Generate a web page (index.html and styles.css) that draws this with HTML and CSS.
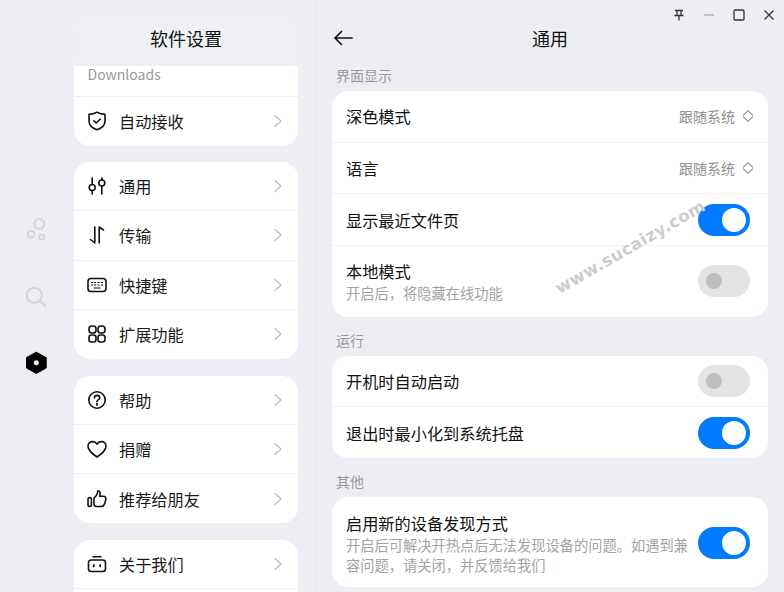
FILE: index.html
```html
<!DOCTYPE html>
<html lang="zh-CN">
<head>
<meta charset="utf-8">
<title>软件设置</title>
<link rel="stylesheet" href="styles.css">
</head>
<body>
<div class="app">
  <nav class="rail">
    <svg class="rail-icon" viewBox="0 0 26 26" fill="none" stroke="#d2d3d6" stroke-width="1.700"><circle cx="15.800" cy="9" r="5"/><circle cx="7.500" cy="19.300" r="3.400"/><circle cx="18.200" cy="22" r="2.600"/></svg>
    <svg class="rail-icon" viewBox="0 0 26 26" fill="none" stroke="#d2d3d6" stroke-width="1.900"><circle cx="10.800" cy="12.300" r="7.600"/><path d="M16.500 18 22.500 23.500"/></svg>
    <svg class="rail-icon" viewBox="0 0 26 26"><path fill="#000" stroke="#000" stroke-linejoin="round" d="M12.800 2.200 22.700 7.600V18L12.800 23.500 3 18V7.600Z"/><circle cx="12.800" cy="12.800" r="2.500" fill="#edeef3"/></svg>
  </nav>

  <section class="list-pane">
    <header class="list-header">
      <div class="header-glow"></div>
      <h1 class="pane-title">软件设置</h1>
    </header>
    <div class="card card-cut">
      <div class="cut-row">Downloads</div>
      <a class="nav-row">
        <svg class="nav-icon" viewBox="0 0 20 20"><path d="M10 1.200C12.400 2.800 15 3.400 18 3.400V10c0 4.400-3.400 7.200-8 8.800C5.400 17.200 2 14.400 2 10V3.400C5 3.400 7.600 2.800 10 1.200Z"/><path d="M6.900 9.900 9.200 12 13.300 8"/></svg>
        <span class="nav-label">自动接收</span>
        <svg class="chev" viewBox="0 0 10 14"><path d="M2 1.500 8 7 2 12.500"/></svg>
      </a>
    </div>
    <div class="card">
      <a class="nav-row">
        <svg class="nav-icon" viewBox="0 0 20 20"><circle cx="5.200" cy="11.500" r="3"/><path d="M5.200 2v6.500M5.200 14.500V18"/><circle cx="14.800" cy="7" r="3"/><path d="M14.800 2v2M14.800 10V18"/></svg>
        <span class="nav-label">通用</span>
        <svg class="chev" viewBox="0 0 10 14"><path d="M2 1.500 8 7 2 12.500"/></svg>
      </a>
      <a class="nav-row">
        <svg class="nav-icon" viewBox="0 0 20 20"><path d="M7.800 2V18L3.500 14.500M12.200 18V2L16.500 5"/></svg>
        <span class="nav-label">传输</span>
        <svg class="chev" viewBox="0 0 10 14"><path d="M2 1.500 8 7 2 12.500"/></svg>
      </a>
      <a class="nav-row">
        <svg class="nav-icon" viewBox="0 0 20 20"><rect x="1" y="3.500" width="18" height="13" rx="3"/><path class="thin" d="M4.500 7.500h1.200M7.500 7.500h1.200M11 7.500h1.200M14.300 7.500h1.200M4.500 10h1.200M7.500 10h1.200M11 10h1.200M14.300 10h1.200M7 13h6"/></svg>
        <span class="nav-label">快捷键</span>
        <svg class="chev" viewBox="0 0 10 14"><path d="M2 1.500 8 7 2 12.500"/></svg>
      </a>
      <a class="nav-row">
        <svg class="nav-icon" viewBox="0 0 20 20"><rect x="2" y="2" width="7" height="7" rx="2.800"/><rect x="11" y="2" width="7" height="7" rx="2.800"/><rect x="2" y="11" width="7" height="7" rx="2.400"/><rect x="11" y="11" width="7" height="7" rx="2.400"/></svg>
        <span class="nav-label">扩展功能</span>
        <svg class="chev" viewBox="0 0 10 14"><path d="M2 1.500 8 7 2 12.500"/></svg>
      </a>
    </div>
    <div class="card">
      <a class="nav-row">
        <svg class="nav-icon" viewBox="0 0 20 20"><circle cx="10" cy="10" r="8.200"/><path d="M7.400 8c0-1.600 1.200-2.600 2.700-2.600s2.600 1 2.600 2.300c0 2-2.700 2-2.700 4"/><path class="dot" d="M10 13.700v1.300"/></svg>
        <span class="nav-label">帮助</span>
        <svg class="chev" viewBox="0 0 10 14"><path d="M2 1.500 8 7 2 12.500"/></svg>
      </a>
      <a class="nav-row">
        <svg class="nav-icon" viewBox="0 0 20 20"><path d="M10 18C5 14.500 1 11.500 1 7.200 1 4.400 3.100 2.600 5.400 2.600 7.300 2.600 9 3.600 10 5.200 11 3.600 12.700 2.600 14.600 2.600 16.900 2.600 19 4.400 19 7.200 19 11.500 15 14.500 10 18Z"/></svg>
        <span class="nav-label">捐赠</span>
        <svg class="chev" viewBox="0 0 10 14"><path d="M2 1.500 8 7 2 12.500"/></svg>
      </a>
      <a class="nav-row">
        <svg class="nav-icon" viewBox="0 0 20 20"><rect x="1" y="8.500" width="3.400" height="9" rx="1.700"/><path d="M7 8.800C9 7.500 10.600 5 10.800 1.800 13 1.800 13.800 4 12.700 7.300H16.500C18.200 7.300 19.200 8.800 18.800 10.500 18.200 13.200 17.600 17.500 14.500 17.500H9.500C8 17.500 7 16.500 7 15Z"/></svg>
        <span class="nav-label">推荐给朋友</span>
        <svg class="chev" viewBox="0 0 10 14"><path d="M2 1.500 8 7 2 12.500"/></svg>
      </a>
    </div>
    <div class="card">
      <a class="nav-row">
        <svg class="nav-icon" viewBox="0 0 20 20"><rect x="1.500" y="6" width="17" height="11.500" rx="2.800"/><path d="M6 2.800h8"/><path class="dot" d="M6.800 11v1.300M13.200 11v1.300"/></svg>
        <span class="nav-label">关于我们</span>
        <svg class="chev" viewBox="0 0 10 14"><path d="M2 1.500 8 7 2 12.500"/></svg>
      </a>
      <a class="nav-row"></a>
    </div>
  </section>

  <main class="detail-pane">
    <div class="win-controls">
      <svg class="win-icon" viewBox="0 0 12 12"><path d="M2 1.500h8M4 1.500v4.500M8 1.500v4.500M1.500 6.500h9M6 6.500v5"/></svg>
      <svg class="win-icon faint" viewBox="0 0 12 12"><path d="M1 6h10"/></svg>
      <svg class="win-icon" viewBox="0 0 12 12"><rect x="1" y="1" width="10" height="10" rx="1.200"/></svg>
      <svg class="win-icon" viewBox="0 0 12 12"><path d="M1.500 1.500l9 9M10.500 1.500l-9 9"/></svg>
    </div>
    <header class="detail-header">
      <svg class="back" viewBox="0 0 20 16"><path d="M19 8H2M8.500 1.500 2 8l6.500 6.500"/></svg>
      <h2 class="pane-title">通用</h2>
    </header>

    <h3 class="group-title first">界面显示</h3>
    <div class="card wide">
      <div class="set-row"><span class="set-label">深色模式</span><span class="select">跟随系统<svg class="updown" viewBox="0 0 12 12"><path d="M1 5.300 6 .7l5 4.600M1 6.700 6 11.300l5-4.600"/></svg></span></div>
      <div class="set-row"><span class="set-label">语言</span><span class="select">跟随系统<svg class="updown" viewBox="0 0 12 12"><path d="M1 5.300 6 .7l5 4.600M1 6.700 6 11.300l5-4.600"/></svg></span></div>
      <div class="set-row"><span class="set-label">显示最近文件页</span><span class="toggle on"></span></div>
      <div class="set-row tall"><div class="set-text"><span class="set-label">本地模式</span><span class="set-desc">开启后，将隐藏在线功能</span></div><span class="toggle"></span></div>
    </div>

    <h3 class="group-title">运行</h3>
    <div class="card wide">
      <div class="set-row mid"><span class="set-label">开机时自动启动</span><span class="toggle"></span></div>
      <div class="set-row mid"><span class="set-label">退出时最小化到系统托盘</span><span class="toggle on"></span></div>
    </div>

    <h3 class="group-title last">其他</h3>
    <div class="card wide">
      <div class="set-row taller"><div class="set-text"><span class="set-label">启用新的设备发现方式</span><span class="set-desc">开启后可解决开热点后无法发现设备的问题。如遇到兼容问题，请关闭，并反馈给我们</span></div><span class="toggle on"></span></div>
    </div>
    <div class="watermark">www.sucaizy.com</div>
  </main>
</div>
</body>
</html>
```

FILE: styles.css
```css
* { box-sizing: border-box; }
html, body { margin: 0; height: 100%; overflow: hidden; }
body {
  background: #edeef3;
  color: #111;
  font-family: "Noto Sans CJK SC", "Noto Sans", sans-serif;
  font-size: 16px;
}
a { color: inherit; text-decoration: none; }
h1, h2, h3 { margin: 0; font-weight: 400; }

.app { display: flex; width: 784px; height: 592px; overflow: hidden; }

.rail {
  width: 74px;
  flex: none;
  display: flex;
  flex-direction: column;
  align-items: center;
  gap: 41.500px;
  padding: 215px 0 0;
}
.rail-icon { width: 26px; height: 26px; transform: translateX(-0.500px); }

.list-pane {
  width: 242px;
  flex: none;
  height: 592px;
  overflow: hidden;
  padding-right: 17px;
  border-right: 1.500px solid #e6e7ec;
}
.list-header {
  position: relative;
  height: 66px;
  display: flex;
  align-items: center;
  justify-content: center;
  padding-top: 12px;
  clip-path: inset(0 -30px 0 -30px);
}
.pane-title { position: relative; top: -1px; font-size: 18px; line-height: 26px; color: #111; }
.header-glow {
  position: absolute;
  left: -4px;
  right: 0;
  top: 16px;
  bottom: -12px;
  background: #eff0f3;
  filter: blur(8px);
}

.card {
  background: #fff;
  border-radius: 16px;
  overflow: hidden;
  margin-bottom: 16.500px;
}
.card-cut {
  border-radius: 0 0 16px 16px;
  height: 80px;
  margin-bottom: 16px;
}
.cut-row {
  height: 30.500px;
  padding-left: 13.500px;
  font-size: 14px;
  line-height: 16px;
  color: #9a9a9a;
  border-bottom: 1px solid #eeeef0;
}
.nav-row {
  height: 49.250px;
  display: flex;
  align-items: center;
  padding-left: 13px;
  padding-right: 15px;
  border-bottom: 1px solid #f1f1f3;
}
.nav-row:last-child { border-bottom: 0; }
.nav-icon {
  width: 20px;
  height: 20px;
  flex: none;
  fill: none;
  stroke: #111;
  stroke-width: 1.600;
  stroke-linecap: round;
  stroke-linejoin: round;
}
.nav-icon .thin { stroke-width: 1.200; }
.nav-icon .dot { stroke-width: 1.800; }
.nav-label { flex: 1; margin-left: 12px; font-size: 16.200px; line-height: 24px; color: #1a1a1a; }
.chev {
  width: 10px;
  height: 14px;
  fill: none;
  stroke: #bbb;
  stroke-width: 1.300;
  stroke-linecap: round;
  stroke-linejoin: round;
}

.detail-pane { position: relative; flex: 1; padding: 0 16px; }
.win-controls {
  position: absolute;
  top: 9px;
  right: 9px;
  display: flex;
  gap: 18px;
}
.win-icon {
  width: 12px;
  height: 12px;
  fill: none;
  stroke: #333;
  stroke-width: 1.300;
}
.win-icon.faint { stroke: #aaa; }
.detail-header {
  position: relative;
  height: 65px;
  display: flex;
  align-items: center;
  justify-content: center;
  padding-top: 12px;
}
.back {
  position: absolute;
  left: 1px;
  top: 30px;
  width: 20px;
  height: 16px;
  fill: none;
  stroke: #111;
  stroke-width: 1.700;
  stroke-linecap: round;
  stroke-linejoin: round;
}
.group-title {
  font-size: 14px;
  line-height: 20px;
  color: #9a9a9a;
  padding-left: 4px;
  margin-bottom: 5.500px;
}
.group-title.first, .group-title.last { margin-bottom: 6px; }
.wide { margin-bottom: 13.500px; }
.wide:has(.mid) { margin-bottom: 13px; }
.set-row {
  height: 51.670px;
  padding: 0 18px 0 14px;
  display: flex;
  align-items: center;
  justify-content: space-between;
  border-bottom: 1px solid #f1f1f3;
}
.set-row:last-child { border-bottom: 0; }
.set-row.mid { height: 51px; }
.set-row.mid:last-child { padding-top: 1px; }
.set-row.tall { height: 71px; }
.set-row.taller { height: 90.500px; padding-top: 1px; }
.set-text { display: flex; flex-direction: column; width: 346px; }
.set-label { font-size: 16.200px; line-height: 24px; color: #111; }
.set-desc { font-size: 14.250px; line-height: 20px; color: #a3a3a3; }
.select {
  display: flex;
  align-items: center;
  gap: 7px;
  font-size: 14px;
  color: #8f8f8f;
  margin-right: -4px;
}
.updown {
  flex: none;
  width: 12px;
  height: 12px;
  fill: none;
  stroke: #8a8a8a;
  stroke-width: 1.100;
}
.toggle {
  position: relative;
  display: block;
  flex: none;
  width: 52px;
  height: 32px;
  border-radius: 16px;
  background: #e4e4e4;
}
.toggle::after {
  content: "";
  position: absolute;
  left: 8px;
  top: 8px;
  width: 16px;
  height: 16px;
  border-radius: 50%;
  background: #bfbfbf;
}
.toggle.on { background: #007aff; }
.toggle.on::after {
  left: 24px;
  top: 4px;
  width: 24px;
  height: 24px;
  background: #fff;
}
.watermark {
  position: absolute;
  left: 241px;
  top: 280px;
  font-family: "DejaVu Sans", sans-serif;
  font-size: 16.500px;
  line-height: 20px;
  font-weight: 700;
  letter-spacing: 0.500px;
  color: #cdcdcd;
  transform: rotate(-30deg);
  transform-origin: left center;
  white-space: nowrap;
}
```
